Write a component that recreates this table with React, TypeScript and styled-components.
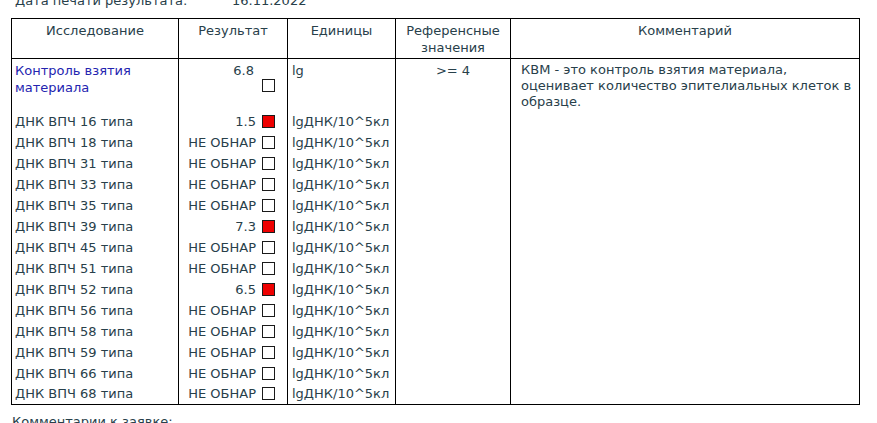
import React from "react";
import styled, { createGlobalStyle } from "styled-components";

interface ResultRow {
    name: string;
    value: string;
    positive: boolean;
}

const rows: ResultRow[] = [
    { name: "ДНК ВПЧ 16 типа", value: "1.5", positive: true },
    { name: "ДНК ВПЧ 18 типа", value: "НЕ ОБНАР", positive: false },
    { name: "ДНК ВПЧ 31 типа", value: "НЕ ОБНАР", positive: false },
    { name: "ДНК ВПЧ 33 типа", value: "НЕ ОБНАР", positive: false },
    { name: "ДНК ВПЧ 35 типа", value: "НЕ ОБНАР", positive: false },
    { name: "ДНК ВПЧ 39 типа", value: "7.3", positive: true },
    { name: "ДНК ВПЧ 45 типа", value: "НЕ ОБНАР", positive: false },
    { name: "ДНК ВПЧ 51 типа", value: "НЕ ОБНАР", positive: false },
    { name: "ДНК ВПЧ 52 типа", value: "6.5", positive: true },
    { name: "ДНК ВПЧ 56 типа", value: "НЕ ОБНАР", positive: false },
    { name: "ДНК ВПЧ 58 типа", value: "НЕ ОБНАР", positive: false },
    { name: "ДНК ВПЧ 59 типа", value: "НЕ ОБНАР", positive: false },
    { name: "ДНК ВПЧ 66 типа", value: "НЕ ОБНАР", positive: false },
    { name: "ДНК ВПЧ 68 типа", value: "НЕ ОБНАР", positive: false },
];

const App: React.FC = () => {
    return (
        <Page>
            <GlobalStyle />
            <PrintDate>
                <DateLabel>Дата печати результата:</DateLabel>
                <span>16.11.2022</span>
            </PrintDate>

            <ResultsTable>
                <colgroup>
                    <col style={{ width: 167 }} />
                    <col style={{ width: 109 }} />
                    <col style={{ width: 108 }} />
                    <col style={{ width: 115 }} />
                    <col />
                </colgroup>
                <thead>
                    <tr>
                        <HeadCell>Исследование</HeadCell>
                        <HeadCell>Результат</HeadCell>
                        <HeadCell>Единицы</HeadCell>
                        <HeadCell>Референсные<br />значения</HeadCell>
                        <HeadCell>Комментарий</HeadCell>
                    </tr>
                </thead>
                <tbody>
                    <ControlRow>
                        <NameCell $link>Контроль взятия<br />материала</NameCell>
                        <ResultCell>
                            <ControlValue>6.8</ControlValue>
                            <Flag $positive={false} />
                        </ResultCell>
                        <UnitCell>lg</UnitCell>
                        <RefCell>&gt;= 4</RefCell>
                        <CommentCell rowSpan={rows.length + 1}>
                            КВМ - это контроль взятия материала,<br />
                            оценивает количество эпителиальных клеток в<br />
                            образце.
                        </CommentCell>
                    </ControlRow>
                    {rows.map((row) => (
                        <DataRow key={row.name}>
                            <NameCell>{row.name}</NameCell>
                            <ResultCell>
                                <ResultLine>
                                    <span>{row.value}</span>
                                    <Flag $positive={row.positive} />
                                </ResultLine>
                            </ResultCell>
                            <UnitCell>lgДНК/10^5кл</UnitCell>
                            <RefCell />
                        </DataRow>
                    ))}
                </tbody>
            </ResultsTable>

            <Footer>Комментарии к заявке:</Footer>
        </Page>
    );
};

const GlobalStyle = createGlobalStyle`
  body {
    margin: 0;
    background: #ffffff;
    color: #28404a;
    font-family: "DejaVu Sans", Verdana, sans-serif;
    font-size: 13px;
  }
`;

const Page = styled.div`
  padding: 0 18px 0 11px;
  margin-top: -8px;
`;

const PrintDate = styled.div`
  display: flex;
  height: 17px;
  align-items: center;
  padding-left: 4px;
  margin-bottom: 9px;
`;

const DateLabel = styled.span`
  width: 217px;
`;

const ResultsTable = styled.table`
  width: 849px;
  border-collapse: collapse;
  table-layout: fixed;
  border: 1px solid #000;
`;

const HeadCell = styled.th`
  height: 36px;
  padding: 3px 4px 0;
  border: 1px solid #000;
  font-weight: normal;
  text-align: center;
  vertical-align: top;
  line-height: 17px;
`;

const ControlRow = styled.tr`
  height: 52px;
  vertical-align: top;
  td {
    padding-top: 3px;
  }
`;

const DataRow = styled.tr`
  height: 21px;
  vertical-align: middle;
`;

const BaseCell = styled.td`
  border-left: 1px solid #000;
  border-right: 1px solid #000;
  padding: 0 3px;
  line-height: 17px;
  white-space: nowrap;
`;

const NameCell = styled(BaseCell)<{ $link?: boolean }>`
  color: ${(p) => (p.$link ? "#2424b0" : "inherit")};
`;

const ResultCell = styled(BaseCell)`
  padding-right: 12px;
  text-align: right;
`;

const ResultLine = styled.div`
  display: flex;
  justify-content: flex-end;
  align-items: center;
  gap: 6px;
`;

const ControlValue = styled.div`
  height: 14px;
  line-height: 17px;
  padding-right: 21px;
`;

const Flag = styled.span<{ $positive: boolean }>`
  display: inline-block;
  width: 11px;
  height: 11px;
  border: 1px solid #1a1a1a;
  background: ${(p) => (p.$positive ? "#ee0000" : "#ffffff")};
  vertical-align: middle;
`;

const UnitCell = styled(BaseCell)`
  padding-left: 4px;
`;

const RefCell = styled(BaseCell)`
  text-align: center;
`;

const CommentCell = styled.td`
  border: 1px solid #000;
  padding: 3px 4px 0 10px;
  vertical-align: top;
  line-height: 16px;
`;

const Footer = styled.div`
  padding: 9px 0 0 1px;
`;

export default App;
